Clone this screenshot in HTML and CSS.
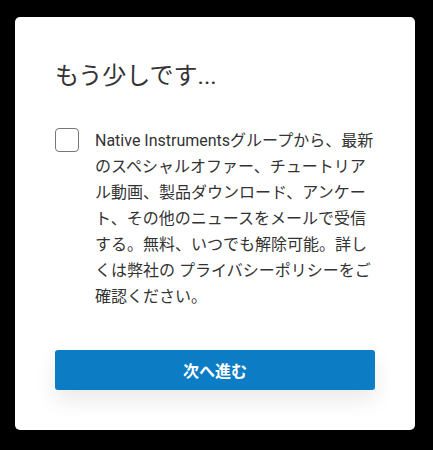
FILE: index.html
```html
<!DOCTYPE html>
<html lang="ja">
<head>
<meta charset="utf-8">
<link rel="stylesheet" href="styles.css">
</head>
<body>
<div class="card">
  <h1 class="title">もう少しです...</h1>
  <label class="consent">
    <span class="box"></span>
    <span class="text">Native Instrumentsグループから、最新のスペシャルオファー、チュートリアル動画、製品ダウンロード、アンケート、その他のニュースをメールで受信する。無料、いつでも解除可能。詳しくは弊社の プライバシーポリシーをご確認ください。</span>
  </label>
  <button class="next">次へ進む</button>
</div>
</body>
</html>
```

FILE: styles.css
```css
html, body {
  margin: 0;
  padding: 0;
  background: #000;
}
body {
  font-family: Roboto, "Noto Sans CJK JP", sans-serif;
  color: #333;
}
.card {
  box-sizing: border-box;
  width: 400px;
  height: 413px;
  margin: 17px 0 0 15px;
  background: #fff;
  border-radius: 5px;
  padding: 43px 40px 40px;
  display: flex;
  flex-direction: column;
}
.title {
  margin: 0 0 36px;
  font-size: 24px;
  font-weight: 400;
  line-height: 32px;
  color: #333;
}
.consent {
  display: flex;
  gap: 16px;
  align-items: flex-start;
}
.box {
  flex: none;
  box-sizing: border-box;
  width: 24px;
  height: 24px;
  border: 1px solid #777;
  border-radius: 4px;
}
.text {
  width: 280px;
  font-size: 16px;
  line-height: 26px;
  color: #333;
}
.next {
  margin-top: 40px;
  height: 40px;
  width: 100%;
  border: 0;
  border-radius: 3px;
  background: #0c7cc4;
  color: #fff;
  font-family: Roboto, "Noto Sans CJK JP", sans-serif;
  font-size: 16px;
  font-weight: 700;
  box-shadow: 0 10px 22px rgba(0, 0, 0, 0.09);
}
```
